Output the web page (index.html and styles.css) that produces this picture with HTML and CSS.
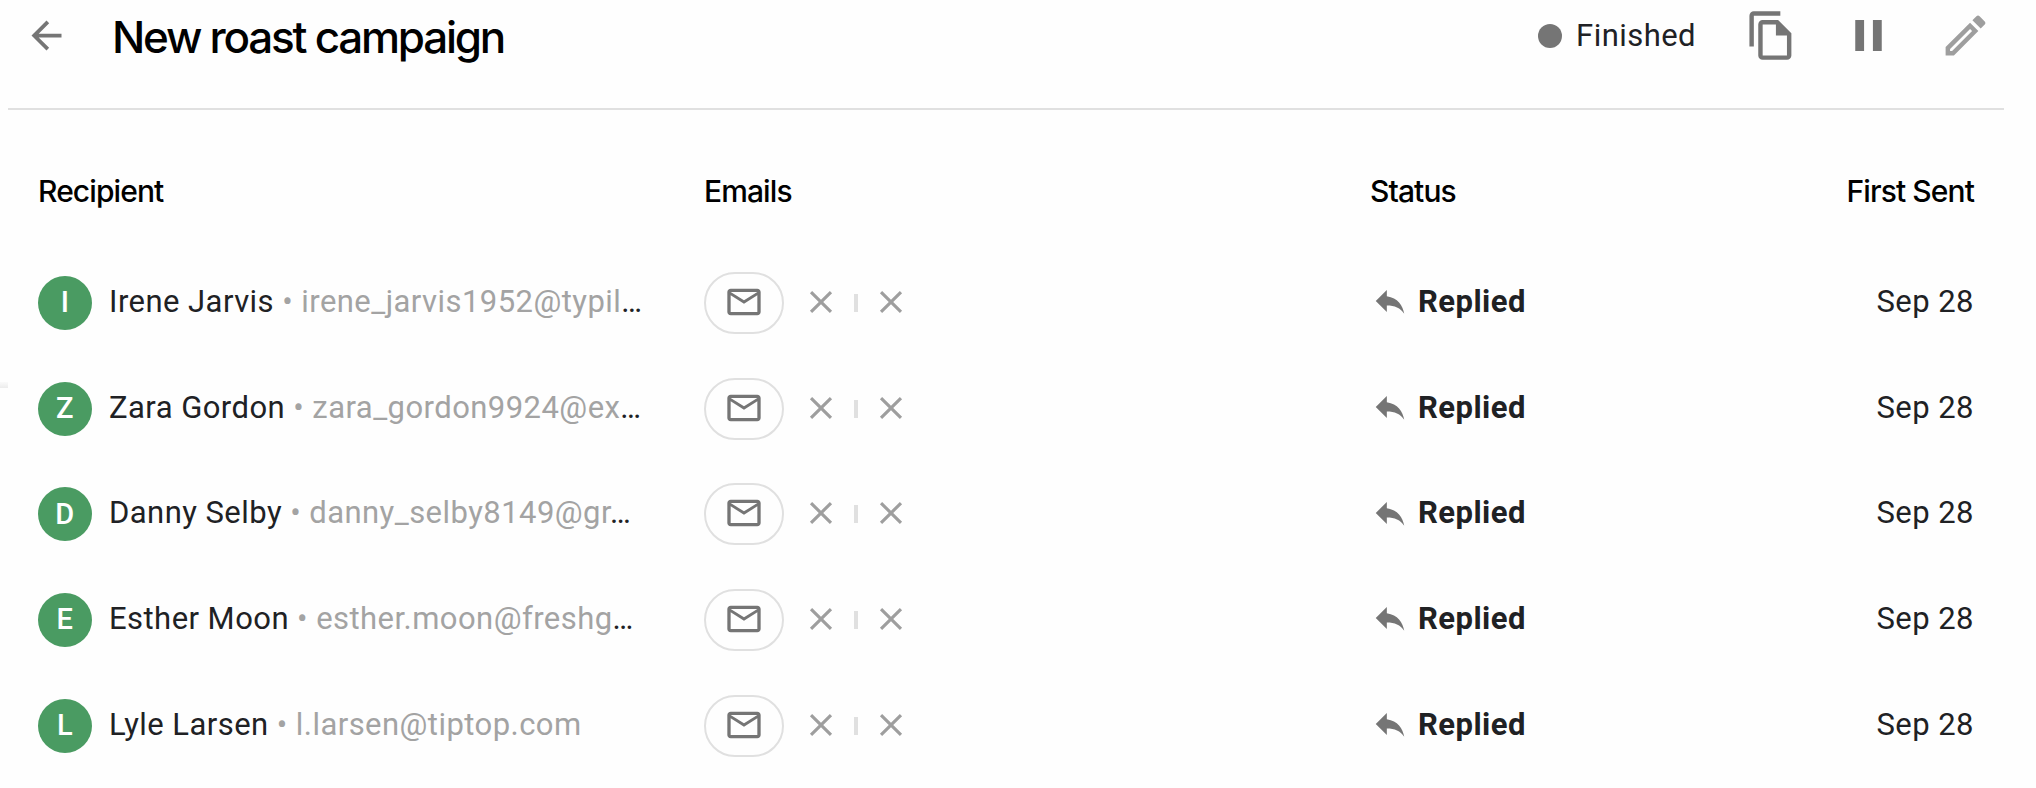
FILE: index.html
```html
<!DOCTYPE html>
<html lang="en">
<head>
  <meta charset="UTF-8" />
  <meta name="viewport" content="width=device-width, initial-scale=1" />
  <title>New roast campaign</title>
  <link rel="stylesheet" href="styles.css">
</head>
<body>
  <svg class="sprite" width="0" height="0">
    <symbol id="mail" viewBox="0 0 24 24"><path d="M22 6c0-1.1-.9-2-2-2H4c-1.1 0-2 .9-2 2v12c0 1.1.9 2 2 2h16c1.1 0 2-.9 2-2V6zm-2 0-8 5-8-5h16zm0 12H4V8l8 5 8-5v10z"/></symbol>
    <symbol id="close" viewBox="0 0 24 24"><path d="M19 6.41 17.59 5 12 10.59 6.41 5 5 6.41 10.59 12 5 17.59 6.41 19 12 13.41 17.59 19 19 17.59 13.41 12z"/></symbol>
    <symbol id="reply" viewBox="0 0 24 24"><path d="M10 9V5l-7 7 7 7v-4.1c5 0 8.5 1.6 11 5.1-1-5-4-10-11-11z"/></symbol>
  </svg>

  <header class="topbar">
    <svg class="back" viewBox="0 0 24 24"><path d="M20 11H7.83l5.59-5.59L12 4l-8 8 8 8 1.41-1.41L7.83 13H20v-2z"/></svg>
    <h1 class="title">New roast campaign</h1>
    <span class="state-dot"></span>
    <span class="state">Finished</span>
    <svg class="tool copy" viewBox="0 0 24 24"><path fill-rule="evenodd" d="M16 1H4c-1.1 0-2 .9-2 2v14h2V3h12V1zM15 5l6 6v10c0 1.1-.9 2-2 2H8c-1.1 0-2-.9-2-2V7c0-1.1.9-2 2-2h7zM8 7v14h11v-9h-5V7H8z"/></svg>
    <svg class="tool pause" viewBox="0 0 24 24"><path d="M6 5h4v14H6zM14 5h4v14h-4z"/></svg>
    <svg class="tool edit" viewBox="0 0 24 24"><path fill-rule="evenodd" d="M3 17.25V21h3.75L17.81 9.94l-3.75-3.75L3 17.25zM5.92 19H5v-.92l9.06-9.06.92.92L5.92 19zM20.71 7.04c.39-.39.39-1.02 0-1.41l-2.34-2.34c-.39-.39-1.02-.39-1.41 0l-1.83 1.83 3.75 3.75 1.83-1.83z"/></svg>
  </header>

  <main class="table">
    <div class="row head">
      <div>Recipient</div>
      <div>Emails</div>
      <div>Status</div>
      <div class="date">First Sent</div>
    </div>
    <div class="row">
      <div class="recipient"><span class="avatar">I</span><span class="who">Irene Jarvis <span class="email">• irene_jarvis1952@typil</span>…</span></div>
      <div class="emails"><span class="pill"><svg class="mail"><use href="#mail"/></svg></span><svg class="close"><use href="#close"/></svg><span class="sep"></span><svg class="close"><use href="#close"/></svg></div>
      <div class="status"><svg class="reply"><use href="#reply"/></svg>Replied</div>
      <div class="date">Sep 28</div>
    </div>
    <div class="row">
      <div class="recipient"><span class="avatar">Z</span><span class="who">Zara Gordon <span class="email">• zara_gordon9924@ex</span>…</span></div>
      <div class="emails"><span class="pill"><svg class="mail"><use href="#mail"/></svg></span><svg class="close"><use href="#close"/></svg><span class="sep"></span><svg class="close"><use href="#close"/></svg></div>
      <div class="status"><svg class="reply"><use href="#reply"/></svg>Replied</div>
      <div class="date">Sep 28</div>
    </div>
    <div class="row">
      <div class="recipient"><span class="avatar">D</span><span class="who">Danny Selby <span class="email">• danny_selby8149@gr</span>…</span></div>
      <div class="emails"><span class="pill"><svg class="mail"><use href="#mail"/></svg></span><svg class="close"><use href="#close"/></svg><span class="sep"></span><svg class="close"><use href="#close"/></svg></div>
      <div class="status"><svg class="reply"><use href="#reply"/></svg>Replied</div>
      <div class="date">Sep 28</div>
    </div>
    <div class="row">
      <div class="recipient"><span class="avatar">E</span><span class="who">Esther Moon <span class="email">• esther.moon@freshg</span>…</span></div>
      <div class="emails"><span class="pill"><svg class="mail"><use href="#mail"/></svg></span><svg class="close"><use href="#close"/></svg><span class="sep"></span><svg class="close"><use href="#close"/></svg></div>
      <div class="status"><svg class="reply"><use href="#reply"/></svg>Replied</div>
      <div class="date">Sep 28</div>
    </div>
    <div class="row">
      <div class="recipient"><span class="avatar">L</span><span class="who">Lyle Larsen <span class="email">• l.larsen@tiptop.com</span></span></div>
      <div class="emails"><span class="pill"><svg class="mail"><use href="#mail"/></svg></span><svg class="close"><use href="#close"/></svg><span class="sep"></span><svg class="close"><use href="#close"/></svg></div>
      <div class="status"><svg class="reply"><use href="#reply"/></svg>Replied</div>
      <div class="date">Sep 28</div>
    </div>
  </main>
  <span class="edge-shadow"></span>
</body>
</html>
```

FILE: styles.css
```css
* {
  box-sizing: border-box;
}
body {
  margin: 0;
  height: 788px;
  overflow: hidden;
  background: #fefefe;
  color: #202124;
  font-family: Roboto, Arial, sans-serif;
  font-size: 31px;
  letter-spacing: 0.45px;
}
svg {
  flex: none;
  fill: #757575;
}
.sprite {
  display: block;
}
.topbar {
  display: flex;
  align-items: center;
  height: 110px;
  margin: 0 32px 0 8px;
  padding: 0 12px 37px 16px;
  border-bottom: 2px solid #e0e0e0;
}
.back {
  width: 45px;
  height: 45px;
}
.title {
  margin: 0 auto 0 43px;
  padding-top: 2px;
  color: #000;
  font-family: Inter, sans-serif;
  font-size: 44px;
  font-weight: 500;
  letter-spacing: -2.25px;
  white-space: nowrap;
}
.state-dot {
  width: 24px;
  height: 24px;
  border-radius: 50%;
  background: #757575;
}
.state {
  margin-left: 14px;
}
.tool {
  width: 53px;
  height: 53px;
}
.copy {
  margin-left: 49px;
}
.pause {
  margin-left: 44px;
}
.edit {
  margin-left: 44px;
  fill: #9e9e9e;
}
.table {
  padding: 29px 62px 0 38px;
}
.row {
  display: grid;
  grid-template-columns: 666px 666px 1fr 200px;
  align-items: center;
  height: 105.7px;
}
.head {
  height: 111px;
  padding-bottom: 7px;
  color: #000;
  font-family: Inter, sans-serif;
  font-size: 30px;
  font-weight: 500;
  letter-spacing: -0.9px;
}
.recipient,
.emails,
.status {
  display: flex;
  align-items: center;
}
.avatar {
  display: flex;
  align-items: center;
  justify-content: center;
  width: 54px;
  height: 54px;
  margin-right: 17px;
  padding-bottom: 1px;
  border-radius: 50%;
  background: #4a9b62;
  color: #fff;
  font-size: 29px;
  font-weight: 500;
}
.who {
  padding-bottom: 3px;
  white-space: pre;
}
.email {
  color: #a3a3a3;
}
.pill {
  display: flex;
  align-items: center;
  justify-content: center;
  width: 80px;
  height: 62px;
  margin-right: 18px;
  padding-bottom: 2px;
  border: 2px solid #e0e0e0;
  border-radius: 31px;
}
.mail {
  width: 40px;
  height: 40px;
}
.close {
  width: 38px;
  height: 38px;
  margin-bottom: 2px;
  fill: #9e9e9e;
}
.sep {
  width: 4px;
  height: 18px;
  margin: 0 14px;
  background: #e0e0e0;
}
.status {
  padding-bottom: 3px;
  font-weight: 700;
}
.reply {
  width: 38px;
  height: 38px;
  margin: 0 9px 0 1px;
}
.date {
  padding-bottom: 3px;
  text-align: right;
}
.head .date {
  padding-bottom: 0;
}
/* sliver of the side panel's shadow at the left edge */
.edge-shadow {
  position: absolute;
  left: 0;
  top: 382px;
  width: 8px;
  height: 6px;
  background: linear-gradient(#fafafa, #ececec);
}
```
